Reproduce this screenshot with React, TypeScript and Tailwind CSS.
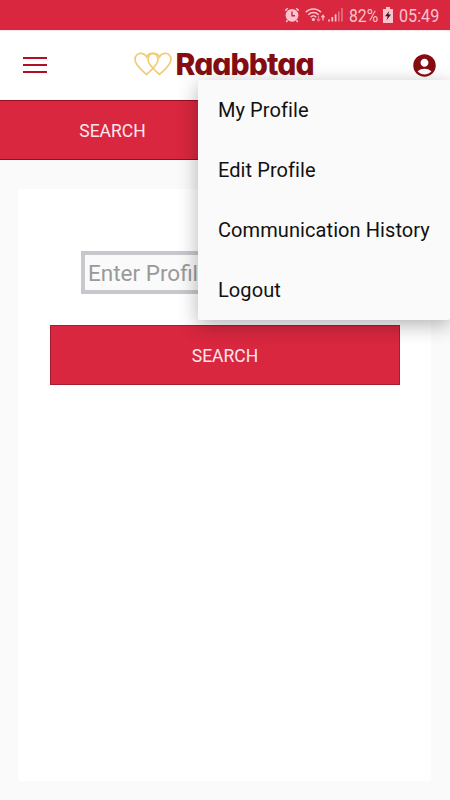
import { MdAccountCircle } from "react-icons/md";

const MENU_ITEMS = ["My Profile", "Edit Profile", "Communication History", "Logout"];

function StatusBar() {
  return (
    <div className="flex h-[30px] items-center justify-end bg-[#d8273f] pr-[11px] text-[#fbc3cc]">
      <svg width="16" height="16" viewBox="0 0 16 16" className="mr-[5px]">
        <circle cx="8" cy="8.3" r="6.4" fill="currentColor" />
        <path d="M1.2 3.6 3.8 1.3M14.8 3.6 12.2 1.3M3.6 13.2 2.2 15M12.4 13.2 13.8 15" stroke="currentColor" strokeWidth="1.5" />
        <path d="M8 4.6V8.8H11" fill="none" stroke="#c92740" strokeWidth="1.4" />
      </svg>
      <svg width="21" height="16" viewBox="0 0 21 16" className="mr-[2px]">
        <g fill="none" stroke="currentColor" strokeWidth="1.5">
          <path d="M.8 5.2C4.8 .8 12 .8 16 5.2" />
          <path d="M3.2 7.8C6 4.8 10.8 4.8 13.6 7.8" />
          <path d="M5.6 10.2C7.2 8.6 9.6 8.6 11.2 10.2" />
        </g>
        <circle cx="8.4" cy="12.5" r="1.6" fill="currentColor" />
        <path d="M13.5 8.5V13.5M11.8 12 13.5 14 15.2 12" fill="none" stroke="#ee7487" strokeWidth="1.2" />
        <path d="M18 13.5V9M16.4 10.3 18 8.3 19.6 10.3" fill="none" stroke="currentColor" strokeWidth="1.2" />
      </svg>
      <svg width="15" height="16" viewBox="0 0 15 16" className="mr-[6px]">
        <path d="M1 14.5V12.5M4.3 14.5V10M7.6 14.5V7.2" stroke="currentColor" strokeWidth="1.7" />
        <path d="M10.8 14.5V4.5M14 14.5V1" stroke="#e87888" strokeWidth="1.5" />
      </svg>
      <span className="mr-[5px] w-[29px] origin-left scale-x-[.83] text-[19px] leading-none">82%</span>
      <svg width="10" height="16" viewBox="0 0 10 16" className="mr-[6px]">
        <path d="M3 0H7V2H10V16H0V2H3Z" fill="currentColor" />
        <path d="M6.2 4 2 9.3H4.7L3.5 13.3 8 7.5H5.3Z" fill="#43121b" />
      </svg>
      <span className="w-[40px] origin-left scale-x-[.85] text-[19px] leading-none">05:49</span>
    </div>
  );
}

function Header() {
  return (
    <header className="flex h-[70px] items-center justify-between border-t border-[#ffe8ed] bg-white pr-[12px] pb-[1px] pl-[23px]">
      <div className="flex w-6 flex-col gap-[5px]">
        <div className="h-[2px] bg-[#b20f27]" />
        <div className="h-[2px] bg-[#b20f27]" />
        <div className="h-[2px] bg-[#b20f27]" />
      </div>
      <div className="mr-[11px] flex items-center pb-[2px]">
        <svg width="38" height="24" viewBox="0 0 38 24" fill="none" stroke="#f0cc75" strokeWidth="1.7" className="mr-[4px]">
          <path d="M12.5 22.5C8.5 18.5 1 13.5 1 7.3C1 3.8 3.6 1.3 6.8 1.3C9.3 1.3 11.3 2.7 12.5 5C13.7 2.7 15.7 1.3 18.2 1.3C21.4 1.3 24 3.8 24 7.3C24 13.5 16.5 18.5 12.5 22.5Z" />
          <path d="M25.5 22.5C21.5 18.5 14 13.5 14 7.3C14 3.8 16.6 1.3 19.8 1.3C22.3 1.3 24.3 2.7 25.5 5C26.7 2.7 28.7 1.3 31.2 1.3C34.4 1.3 37 3.8 37 7.3C37 13.5 29.5 18.5 25.5 22.5Z" />
        </svg>
        <span className="w-[138px] font-['Inter',sans-serif] text-[30px] leading-none font-extrabold tracking-[-0.9px] text-[#850d12] [font-feature-settings:'cv11']">
          Raabbtaa
        </span>
      </div>
      <MdAccountCircle size={27} color="#850d12" />
    </header>
  );
}

function UserMenu() {
  return (
    <div className="absolute top-[80px] right-0 w-[252px] rounded-[2px] bg-[#fafafa] shadow-[0_5px_20px_rgba(0,0,0,0.3)]">
      {MENU_ITEMS.map((item) => (
        <div key={item} className="flex h-[60px] items-center pl-[20px] text-[20px] tracking-[0.08px] whitespace-nowrap text-[#111]">
          {item}
        </div>
      ))}
    </div>
  );
}

export default function App() {
  return (
    <div className="relative flex h-[800px] w-[450px] flex-col overflow-hidden bg-[#fafafa] font-['Roboto',sans-serif]">
      <StatusBar />
      <Header />
      <div className="flex h-[60px] shrink-0 border-y border-[#980d22] bg-[#d8273f]">
        <div className="flex w-[225px] items-center justify-center pt-[2px] text-[17.5px] text-[#ffe6ec]">SEARCH</div>
      </div>
      <main className="mx-[18px] mt-[29px] flex h-[592px] w-[413px] flex-col rounded-[3px] bg-white px-8 pt-[62px]">
        <div className="mx-[31px] flex h-[43px] items-center border-4 border-[#c8c8cc] bg-[#fafafa] pt-[2px] pl-[3px] text-[22.5px] text-[#999]">
          Enter Profile
        </div>
        <button className="mt-[31px] h-[60px] w-[350px] border border-[#a61c30] bg-[#d8273f] pt-[2px] text-[17.5px] text-[#ffe6ec]">
          SEARCH
        </button>
      </main>
      <UserMenu />
    </div>
  );
}
